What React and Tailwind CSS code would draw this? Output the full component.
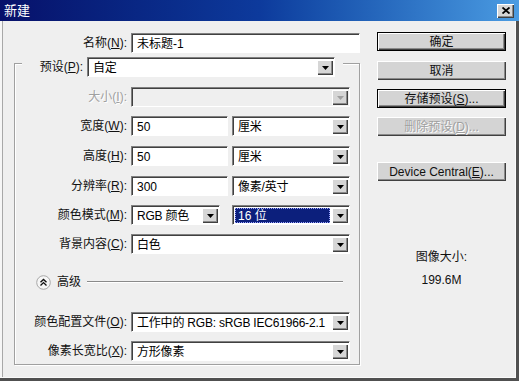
import React from 'react';

const raised = 'shadow-[inset_1px_1px_0_#ffffff,inset_-1px_-1px_0_#404040,inset_-2px_-2px_0_#8a8a8a]';

const Arrow = ({ disabled }) => (
    <div className={`w-[16px] h-full shrink-0 bg-[#d6d6d6] flex items-center justify-center ${raised}`}>
        <svg width="7" height="4" viewBox="0 0 7 4">
            <path d="M0 0h7L3.5 4z" fill={disabled ? '#a0a0a0' : '#000'} />
        </svg>
    </div>
);

const Box = ({ className = '', disabled, children }) => (
    <div
        className={`h-[20px] flex p-[1px] pl-[2px] pt-[2px] border border-t-[#808080] border-l-[#808080] border-r-[#ffffff] border-b-[#ffffff] shadow-[inset_1px_1px_0_#404040] ${disabled ? 'bg-[#efefef]' : 'bg-white'} ${className}`}
    >
        {children}
    </div>
);

const Input = ({ className, value }) => (
    <Box className={className}>
        <div className="flex-1 flex items-center pl-[3px] text-[12px] leading-none whitespace-nowrap">{value}</div>
    </Box>
);

const Select = ({ className, value, disabled, active }) => (
    <Box className={className} disabled={disabled}>
        <div className="flex-1 min-w-0 flex items-center pr-[2px] overflow-hidden">
            {active ? (
                <div className="h-full w-full flex items-center pl-[3px] bg-[#0c1f7c] text-white outline-1 outline-dotted outline-[#9aa4ff] -outline-offset-1 text-[12px] leading-none whitespace-nowrap">
                    {value}
                </div>
            ) : (
                <div className="pl-[3px] text-[12px] leading-none whitespace-nowrap tracking-[-0.2px]">{value}</div>
            )}
        </div>
        <Arrow disabled={disabled} />
    </Box>
);

const Label = ({ className, disabled, children }) => (
    <div
        className={`text-right text-[12px] leading-none shrink-0 whitespace-nowrap ${disabled ? 'text-[#a0a0a0] [text-shadow:1px_1px_0_#ffffff]' : 'text-[#111]'} ${className}`}
    >
        {children}
    </div>
);

const Row = ({ label, disabled, className = '', children }) => (
    <div className={`flex items-center gap-[4px] ${className}`}>
        <Label className="w-[112px]" disabled={disabled}>{label}</Label>
        {children}
    </div>
);

const Btn = ({ children, def, disabled, className = '' }) => (
    <button
        type="button"
        className={`h-[19px] w-[129px] flex items-center justify-center text-[12px] leading-none whitespace-nowrap bg-[#d4d4d4] ${def ? 'border border-black' : ''} ${raised} ${disabled ? 'text-[#a0a0a0] [text-shadow:1px_1px_0_#ffffff]' : 'text-[#111]'} ${className}`}
    >
        {children}
    </button>
);

const App = () => {
    return (
        <div className="w-[519px] h-[381px] bg-[#efefef] flex flex-col font-['Liberation_Sans','Noto_Sans_CJK_SC',sans-serif] shadow-[inset_-3px_-3px_0_#505050,inset_-4px_-4px_0_#fafafa,inset_2px_0_0_#f6f6f6,inset_3px_0_0_#a8a8a8] overflow-hidden">
            {/* Title bar */}
            <div className="h-[21px] shrink-0 flex items-center justify-between pl-[4px] pr-[5px] bg-linear-to-r from-[#07106a] via-[#0d3a9c] to-[#4b9ce2]">
                <span className="text-white text-[13px] leading-none">新建</span>
                <div className={`w-[17px] h-[14px] bg-[#d6d6d6] flex items-center justify-center ${raised}`}>
                    <svg width="8" height="7" viewBox="0 0 8 7">
                        <path d="M0.5 0.5l7 6M7.5 0.5l-7 6" stroke="#000" strokeWidth="1.8" />
                    </svg>
                </div>
            </div>

            <div className="flex pt-[11px]">
                {/* Left column */}
                <div className="w-[377px] shrink-0 flex flex-col pt-[1px]">
                    <div className="flex items-center gap-[4px]">
                        <Label className="w-[127px]">名称(<u>N</u>):</Label>
                        <Input className="w-[229px]" value="未标题-1" />
                    </div>

                    {/* Group box */}
                    <div className="ml-[14px] w-[346px] mt-[10px] flex flex-col border border-[#a0a0a0] shadow-[inset_1px_1px_0_#ffffff,1px_1px_0_#ffffff] pb-[3px]">
                        <div className="-mt-[7px] ml-[7px] w-[321px] flex items-center gap-[4px] pr-[8px] bg-[#efefef]">
                            <Label className="w-[61px]">预设(<u>P</u>):</Label>
                            <Select className="w-[248px]" value="自定" />
                        </div>

                        <Row label={<>大小(<u>I</u>):</>} disabled className="mt-[10px]">
                            <Select className="w-[219px]" value="" disabled />
                        </Row>
                        <Row label={<>宽度(<u>W</u>):</>} className="mt-[9px]">
                            <Input className="w-[97px]" value="50" />
                            <Select className="w-[118px]" value="厘米" />
                        </Row>
                        <Row label={<>高度(<u>H</u>):</>} className="mt-[10px]">
                            <Input className="w-[97px]" value="50" />
                            <Select className="w-[118px]" value="厘米" />
                        </Row>
                        <Row label={<>分辨率(<u>R</u>):</>} className="mt-[10px]">
                            <Input className="w-[97px]" value="300" />
                            <Select className="w-[118px]" value="像素/英寸" />
                        </Row>
                        <Row label={<>颜色模式(<u>M</u>):</>} className="mt-[9px]">
                            <Select className="w-[89px]" value="RGB 颜色" />
                            <Select className="w-[118px] ml-[8px]" value="16 位" active />
                        </Row>
                        <Row label={<>背景内容(<u>C</u>):</>} className="mt-[9px]">
                            <Select className="w-[219px]" value="白色" />
                        </Row>

                        {/* Advanced */}
                        <div className="mt-[20px] h-[16px] flex items-center pl-[21px] pr-[16px]">
                            <svg width="15" height="15" viewBox="0 0 15 15" className="shrink-0">
                                <circle cx="7.5" cy="7.5" r="6.8" fill="#f6f6f6" stroke="#a8a8a8" />
                                <path d="M4.5 7.2l3-2.8 3 2.8M4.5 10.4l3-2.8 3 2.8" fill="none" stroke="#111" strokeWidth="1.4" />
                            </svg>
                            <span className="ml-[6px] text-[12px] leading-none text-[#111]">高级</span>
                            <div className="ml-[6px] flex-1 h-[2px] border-t border-[#8a8a8a] border-b border-b-white" />
                        </div>

                        <Row label={<>颜色配置文件(<u>O</u>):</>} className="mt-[22px]">
                            <Select className="w-[219px]" value="工作中的 RGB: sRGB IEC61966-2.1" />
                        </Row>
                        <Row label={<>像素长宽比(<u>X</u>):</>} className="mt-[9px]">
                            <Select className="w-[219px]" value="方形像素" />
                        </Row>
                    </div>
                </div>

                {/* Right column */}
                <div className="w-[129px] flex flex-col items-center">
                    <Btn def>确定</Btn>
                    <Btn className="mt-[10px]">取消</Btn>
                    <Btn def className="mt-[9px]">存储预设(<u>S</u>)...</Btn>
                    <Btn disabled className="mt-[9px]">删除预设(<u>D</u>)...</Btn>
                    <Btn className="mt-[26px]">Device Central(<u>E</u>)...</Btn>
                    <div className="mt-[68px] text-[12px] leading-[16px] text-[#111]">图像大小:</div>
                    <div className="mt-[7px] text-[12px] leading-[16px] text-[#111]">199.6M</div>
                </div>
            </div>
        </div>
    );
};

export default App;
